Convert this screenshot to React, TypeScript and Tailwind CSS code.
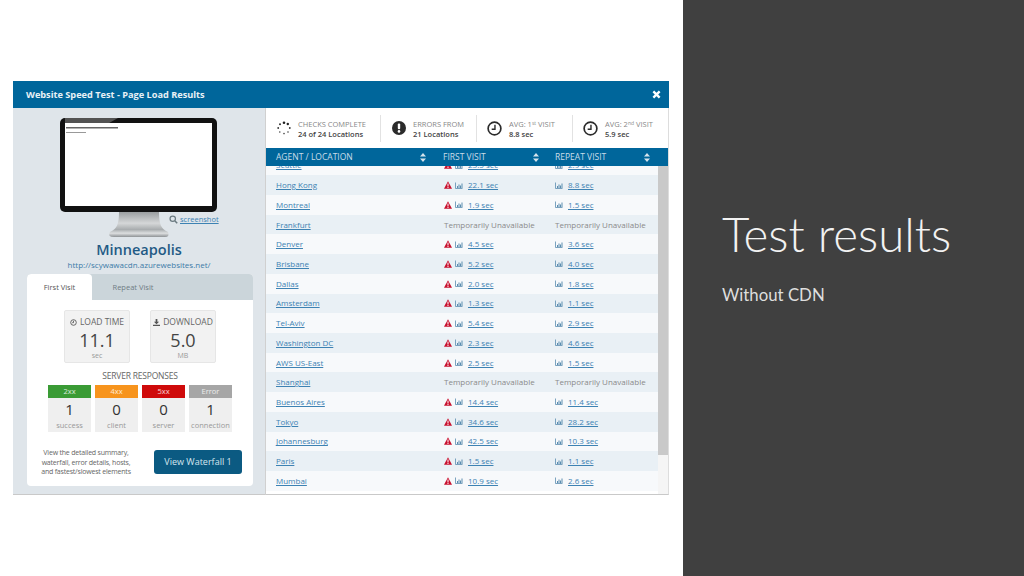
import React from "react";

type Row = { name: string; a?: string; b?: string };
const rows: Row[] = [
  { name: "Seattle", a: "23.5 sec", b: "2.9 sec" },
  { name: "Hong Kong", a: "22.1 sec", b: "8.8 sec" },
  { name: "Montreal", a: "1.9 sec", b: "1.5 sec" },
  { name: "Frankfurt" },
  { name: "Denver", a: "4.5 sec", b: "3.6 sec" },
  { name: "Brisbane", a: "5.2 sec", b: "4.0 sec" },
  { name: "Dallas", a: "2.0 sec", b: "1.8 sec" },
  { name: "Amsterdam", a: "1.3 sec", b: "1.1 sec" },
  { name: "Tel-Aviv", a: "5.4 sec", b: "2.9 sec" },
  { name: "Washington DC", a: "2.3 sec", b: "4.6 sec" },
  { name: "AWS US-East", a: "2.5 sec", b: "1.5 sec" },
  { name: "Shanghai" },
  { name: "Buenos Aires", a: "14.4 sec", b: "11.4 sec" },
  { name: "Tokyo", a: "34.6 sec", b: "28.2 sec" },
  { name: "Johannesburg", a: "42.5 sec", b: "10.3 sec" },
  { name: "Paris", a: "1.5 sec", b: "1.1 sec" },
  { name: "Mumbai", a: "10.9 sec", b: "2.6 sec" },
];

const Warn = () => (
  <svg width="8" height="8" viewBox="0 0 16 16" className="shrink-0">
    <path d="M8 0.5 L16 15.5 H0 Z" fill="#c8102e" />
    <rect x="7" y="5" width="2" height="6" fill="#fff" />
    <rect x="7" y="12" width="2" height="2" fill="#fff" />
  </svg>
);
const Chart = () => (
  <svg width="8" height="7" viewBox="0 0 16 14" className="shrink-0">
    <path d="M1 1V13H15" fill="none" stroke="#5b8db0" strokeWidth="1.6" />
    <path d="M4 12V8H6V12ZM7 12V5H9V12ZM10 12V7H12V12ZM13 12V3H15V12Z" fill="#5b8db0" />
  </svg>
);
const Sort = () => (
  <svg width="6" height="9" viewBox="0 0 6 9" className="shrink-0">
    <path d="M3 0L6 3.6H0ZM3 9L0 5.4H6Z" fill="#d5e3ec" />
  </svg>
);
const Clock = () => (
  <svg width="15" height="15" viewBox="0 0 16 16" className="shrink-0">
    <circle cx="8" cy="8" r="6.8" fill="#fff" stroke="#2b2b2b" strokeWidth="1.8" />
    <path d="M8.5 4V8.8H5" fill="none" stroke="#2b2b2b" strokeWidth="1.5" />
  </svg>
);
const Spinner = () => (
  <svg width="14" height="14" viewBox="0 0 14 14" className="shrink-0">
    <circle cx="7" cy="1.8" r="1.3" fill="#222" />
    <circle cx="10.8" cy="3" r="1.2" fill="#222" />
    <circle cx="3" cy="3.2" r="1" fill="#333" />
    <circle cx="1.2" cy="7" r="0.9" fill="#333" />
    <circle cx="12.8" cy="7" r="0.9" fill="#333" />
    <circle cx="2.8" cy="11" r="0.8" fill="#444" />
    <circle cx="11" cy="11" r="0.8" fill="#444" />
    <circle cx="7" cy="12.6" r="0.8" fill="#444" />
  </svg>
);
const Monitor = () => (
  <svg width="158" height="120" viewBox="0 0 158 120" className="block">
    <defs>
      <linearGradient id="st" x1="0" y1="0" x2="0" y2="1">
        <stop offset="0" stopColor="#9a9ea0" />
        <stop offset="0.45" stopColor="#d5d7d8" />
        <stop offset="0.7" stopColor="#a9adaf" />
        <stop offset="0.85" stopColor="#dcdedf" />
        <stop offset="1" stopColor="#8e9295" />
      </linearGradient>
    </defs>
    <path d="M59 94H99C99 106 101 111 108 114Q110 119 105 119H54Q47 119 50 114C57 111 59 106 59 94Z" fill="url(#st)" />
    <rect x="0" y="0" width="157" height="94" rx="5" fill="#111" />
    <path d="M5 0H58L5 30Z" fill="#8b8b8b" opacity="0.55" />
    <rect x="5" y="5" width="147" height="83" fill="#fff" />
    <rect x="6" y="9" width="52" height="1.5" fill="#666" />
    <rect x="6" y="14" width="20" height="1" fill="#999" />
  </svg>
);

const Metric = ({ icon, label, value, unit }: { icon: React.ReactNode; label: string; value: string; unit: string }) => (
  <div className="w-[66px] h-[53px] bg-[#f2f2f2] border border-[#e6e6e6] rounded-[2px] flex flex-col items-center text-[#666]">
    <div className="flex items-center gap-[3px] text-[8.5px] leading-[10px] mt-[6px] whitespace-nowrap">
      {icon}
      {label}
    </div>
    <div className="text-[18px] leading-[22px] text-[#444] mt-[2px]">{value}</div>
    <div className="text-[7px] leading-[9px] text-[#999]">{unit}</div>
  </div>
);
const Resp = ({ head, color, value, label }: { head: string; color: string; value: string; label: string }) => (
  <div className="w-[43px] h-[47px] bg-[#efefef] flex flex-col items-center">
    <div className={`${color} w-full h-[13px] text-white/80 text-[7.5px] leading-[13px] text-center`}>{head}</div>
    <div className="text-[15px] leading-[20px] text-[#333] mt-[1px]">{value}</div>
    <div className="text-[7.5px] leading-[10px] text-[#999] mt-[1px]">{label}</div>
  </div>
);
const Stat = ({ icon, top, bottom, w }: { icon: React.ReactNode; top: React.ReactNode; bottom: string; w: string }) => (
  <div className={`${w} flex items-center gap-[7px] h-[27px] border-r border-[#e2e2e2] last:border-r-0`}>
    {icon}
    <div className="mt-[3px]">
      <div className="text-[7.5px] leading-[10px] text-[#888] whitespace-nowrap">{top}</div>
      <div className="text-[7.5px] leading-[11px] font-semibold text-[#444] whitespace-nowrap">{bottom}</div>
    </div>
  </div>
);
const Val = ({ v, warn }: { v?: string; warn?: boolean }) =>
  v ? (
    <div className="flex items-center">
      {warn && <span className="w-[11px] flex"><Warn /></span>}
      <span className="w-[13px] flex"><Chart /></span>
      <a className="underline text-[#3d82b3] text-[8px]">{v}</a>
    </div>
  ) : (
    <div className="flex items-center text-[8px] text-[#8a8a8a] whitespace-nowrap">Temporarily Unavailable</div>
  );

export default function App() {
  return (
    <div className="w-[1024px] h-[576px] flex overflow-hidden bg-white font-['Open_Sans',sans-serif]">
      <div className="w-[683px] pt-[81px] pl-[13px]">
        <div className="w-[656px] h-[414px] flex flex-col bg-white">
          <div className="h-[27px] bg-[#00669b] flex items-center justify-between pl-[13px] pr-[8px] shrink-0">
            <span className="text-[9.2px] font-bold text-[#e8f1f6]">Website Speed Test - Page Load Results</span>
            <svg width="9" height="9" viewBox="0 0 10 10"><path d="M1.5 1.5L8.5 8.5M8.5 1.5L1.5 8.5" stroke="#fff" strokeWidth="2.6" /></svg>
          </div>
          <div className="flex flex-1 min-h-0">
            <div className="w-[252px] bg-[#dfe5ea] flex flex-col items-center relative shrink-0 border-b border-[#c9c9c9]">
              <div className="mt-[10px] h-[119px]"><Monitor /></div>
              <div className="absolute top-[106px] left-[156px] flex items-center gap-[2px]">
                <svg width="9" height="9" viewBox="0 0 12 12"><circle cx="5" cy="5" r="3.6" fill="none" stroke="#6b7a80" strokeWidth="1.6" /><path d="M8 8L11 11" stroke="#6b7a80" strokeWidth="2" /></svg>
                <a className="underline text-[#3d82b3] text-[7.5px]">screenshot</a>
              </div>
              <div className="text-[14.5px] font-semibold leading-[20px] text-[#1f5a85] mt-[3px]">Minneapolis</div>
              <div className="text-[8px] leading-[11px] text-[#3d7ba8] mt-[-1px]">http://scywawacdn.azurewebsites.net/</div>
              <div className="w-[226px] h-[212px] mt-[4px] ml-[2px] bg-white rounded-[4px] flex flex-col items-center overflow-hidden">
                <div className="w-full h-[26px] bg-[#cbd5da] flex shrink-0">
                  <div className="w-[65px] bg-white rounded-t-[4px] text-[7.5px] leading-[26px] text-center text-[#555]">First Visit</div>
                  <div className="w-[82px] text-[7.5px] leading-[26px] text-center text-[#6f7c84]">Repeat Visit</div>
                </div>
                <div className="flex gap-[20px] mt-[10px]">
                  <Metric
                    label="LOAD TIME"
                    value="11.1"
                    unit="sec"
                    icon={<svg width="7" height="7" viewBox="0 0 8 8"><circle cx="4" cy="4" r="3.2" fill="none" stroke="#555" /><path d="M4 2V4.2H2.5" fill="none" stroke="#555" /></svg>}
                  />
                  <Metric
                    label="DOWNLOAD"
                    value="5.0"
                    unit="MB"
                    icon={<svg width="7" height="7" viewBox="0 0 8 8"><path d="M3 0H5V3H7L4 6L1 3H3ZM0 6.6H8V8H0Z" fill="#555" /></svg>}
                  />
                </div>
                <div className="text-[8.5px] leading-[12px] text-[#666] mt-[7px] tracking-[-0.2px]">SERVER RESPONSES</div>
                <div className="flex gap-[4px] mt-[3px]">
                  <Resp head="2xx" color="bg-[#3a9b35]" value="1" label="success" />
                  <Resp head="4xx" color="bg-[#f7941d]" value="0" label="client" />
                  <Resp head="5xx" color="bg-[#cf0a0a]" value="0" label="server" />
                  <Resp head="Error" color="bg-[#a6a6a6]" value="1" label="connection" />
                </div>
                <div className="flex items-center mt-[16px] w-full">
                  <div className="w-[118px] text-center text-[7px] leading-[9.5px] text-[#666] tracking-[-0.2px]">
                    View the detailed summary,<br />waterfall, error details, hosts,<br />and fastest/slowest elements
                  </div>
                  <div className="ml-[9px] w-[88px] h-[24px] rounded-[3px] bg-[#0b5a82] text-[#d6e6ef] text-[9px] leading-[24px] text-center">View Waterfall 1</div>
                </div>
              </div>
            </div>
            <div className="w-px bg-[#d0d0d0] shrink-0" />
            <div className="flex-1 min-w-0 flex flex-col border-r border-[#ddd] border-b-[#c9c9c9] border-b">
              <div className="h-[40px] flex items-center pl-[11px] pr-[4px] shrink-0 bg-white">
                <Stat w="w-[104px]" icon={<Spinner />} bottom="24 of 24 Locations" top="CHECKS COMPLETE" />
                <Stat w="w-[96px] pl-[11px]" icon={<svg width="14" height="14" viewBox="0 0 14 14" className="shrink-0"><circle cx="7" cy="7" r="7" fill="#2b2b2b" /><rect x="5.8" y="2.6" width="2.4" height="5.6" rx="1" fill="#fff" /><circle cx="7" cy="10.4" r="1.3" fill="#fff" /></svg>} bottom="21 Locations" top="ERRORS FROM" />
                <Stat w="w-[96px] pl-[10px]" icon={<Clock />} bottom="8.8 sec" top={<>AVG: 1<sup className="text-[5px]">st</sup> VISIT</>} />
                <Stat w="w-[90px] pl-[10px]" icon={<Clock />} bottom="5.9 sec" top={<>AVG: 2<sup className="text-[5px]">nd</sup> VISIT</>} />
              </div>
              <div className="h-[18px] bg-[#00669b] flex items-center text-[8.5px] text-[#c9dde9] shrink-0 pl-[10px] relative z-10">
                <div className="w-[167px] flex items-center justify-between pr-[17px]">AGENT / LOCATION<Sort /></div>
                <div className="w-[112px] flex items-center justify-between pr-[16px]">FIRST VISIT<Sort /></div>
                <div className="w-[110px] flex items-center justify-between pr-[15px]">REPEAT VISIT<Sort /></div>
              </div>
              <div className="flex flex-1 min-h-0 overflow-hidden">
                <div className="w-[392px] shrink-0 overflow-hidden">
                  <div className="mt-[-10.5px]">
                    {rows.map((r, i) => (
                      <div key={r.name} className={`h-[19.73px] flex items-center pl-[10px] ${i % 2 === 1 ? "bg-[#e9f0f5]" : "bg-[#f7f9fb]"}`}>
                        <a className="w-[168px] underline text-[#3d82b3] text-[8px]">{r.name}</a>
                        <div className="w-[111px]"><Val v={r.a} warn /></div>
                        <div><Val v={r.b} /></div>
                      </div>
                    ))}
                  </div>
                </div>
                <div className="flex-1 bg-[#f5f5f5] flex flex-col">
                  <div className="h-[289px] bg-[#c9c9c9]" />
                </div>
              </div>
            </div>
          </div>
        </div>
      </div>
      <div className="flex-1 bg-[#404040] pl-[39px] text-white font-['Lato',sans-serif]">
        <div className="mt-[203px] text-[47.5px] leading-[62px] font-light text-[#f2f2f2]">Test results</div>
        <div className="mt-[18px] text-[16.8px] leading-[24px] text-[#dedede]">Without CDN</div>
      </div>
    </div>
  );
}
